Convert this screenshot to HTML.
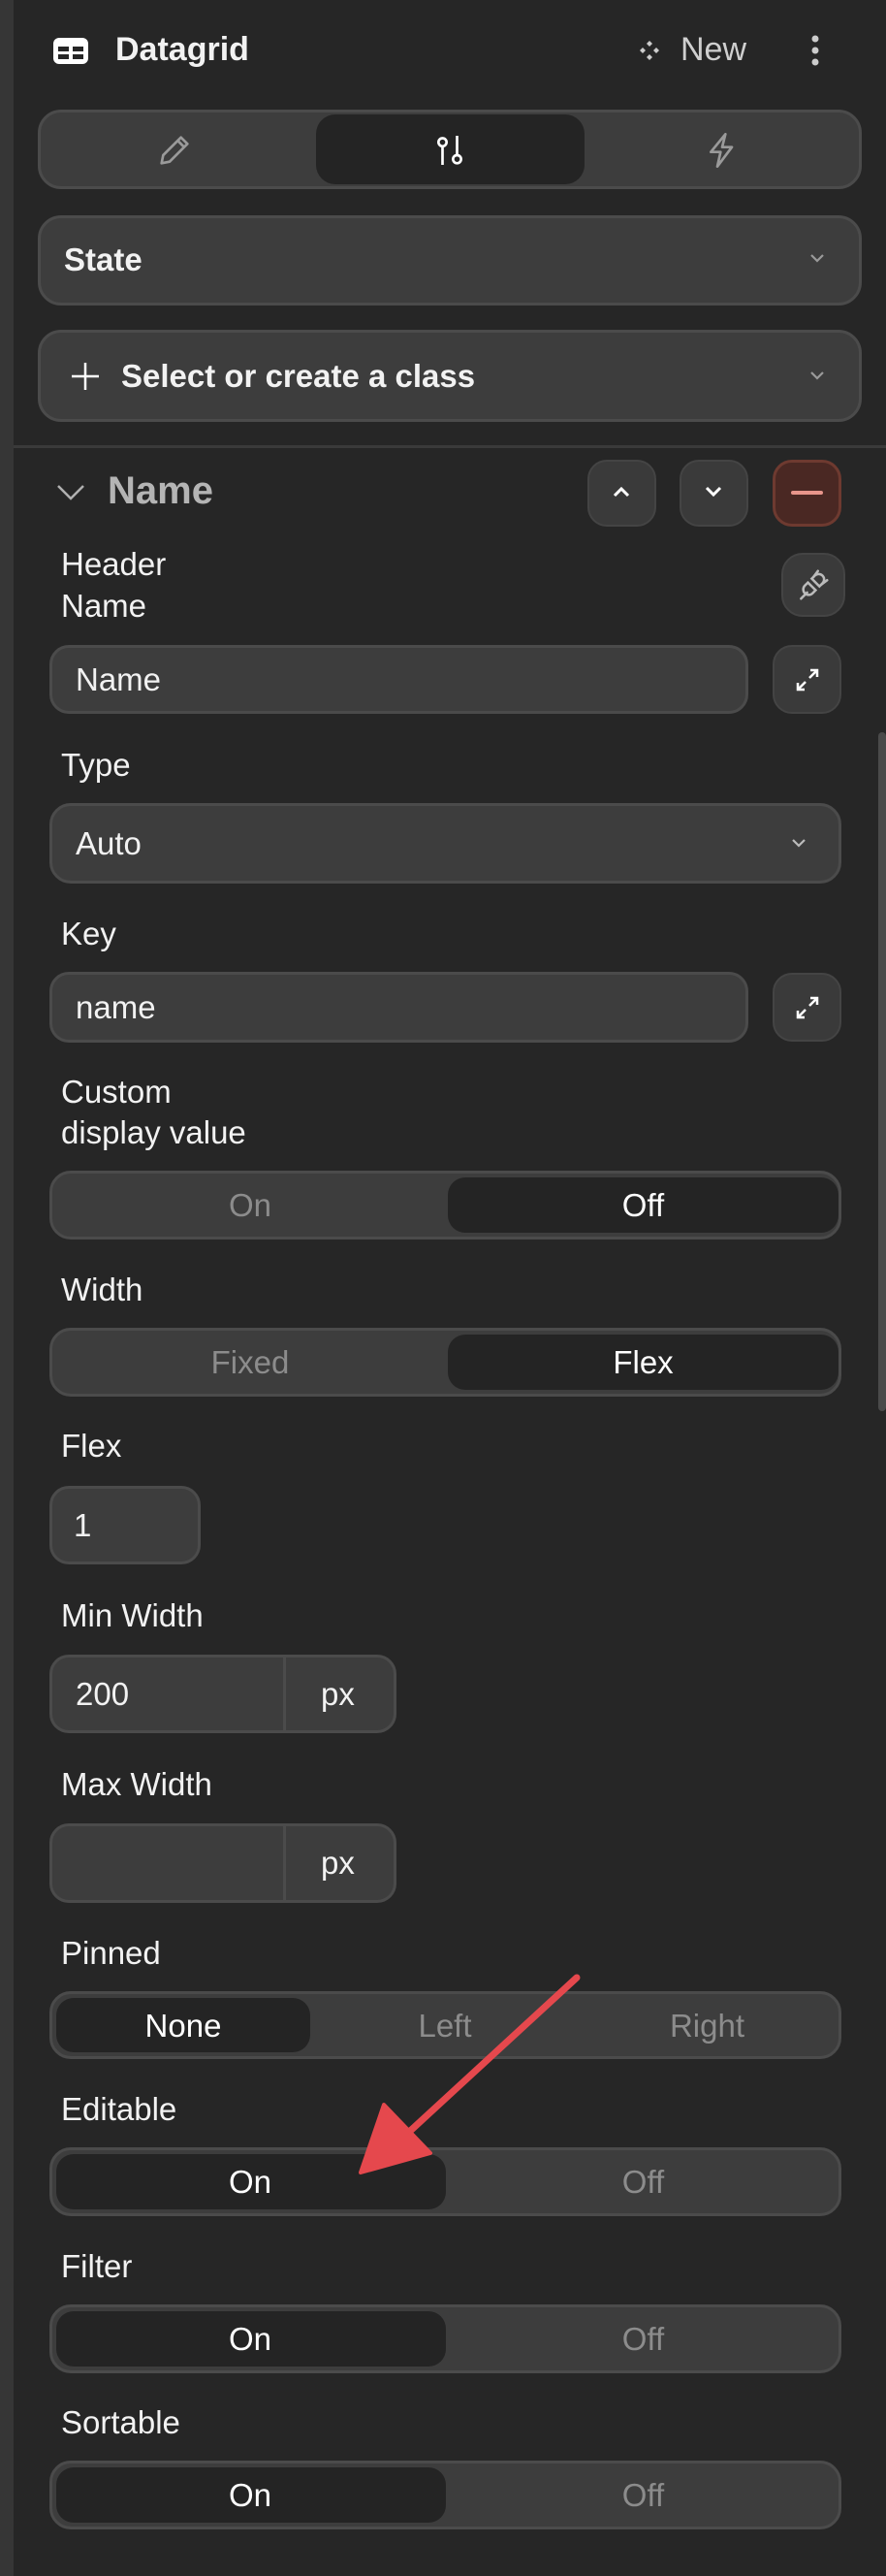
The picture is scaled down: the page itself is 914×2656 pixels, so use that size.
<!DOCTYPE html>
<html><head><meta charset="utf-8"><style>
*{box-sizing:border-box;margin:0;padding:0}
body{width:914px;height:2656px;background:#262626;position:relative;overflow:hidden;font-family:"Liberation Sans",sans-serif;color:#f2f2f2}
.a{position:absolute}
.strip{left:0;top:0;width:14px;height:2656px;background:#363636}
.box{position:absolute;background:#3d3d3d;border:3px solid #4b4b4b;border-radius:24px}
.lbl{position:absolute;left:63px;font-size:33px;line-height:42px;color:#f2f2f2}
.txt{position:absolute;font-size:33px;line-height:40px}
.seg{position:absolute;left:51px;width:817px;height:71px;background:#3d3d3d;border:3px solid #4b4b4b;border-radius:22px}
.seg .on{position:absolute;top:4px;height:57px;background:#242424;border-radius:18px}
.seg span{position:absolute;top:0;line-height:65px;font-size:33px;text-align:center;color:#8c8c8c}
.seg span.w{color:#fff}
.btn{position:absolute;background:#3a3a3a;border:2px solid #444;border-radius:20px}
</style></head><body>
<div class="a strip"></div>

<svg class="a" style="left:54px;top:38px" width="38" height="29" viewBox="0 0 38 29"><rect x="1" y="1" width="36" height="27" rx="6" fill="#fff"/><rect x="6" y="10" width="11" height="5" fill="#262626"/><rect x="21" y="10" width="11" height="5" fill="#262626"/><rect x="6" y="18" width="11" height="5" fill="#262626"/><rect x="21" y="18" width="11" height="5" fill="#262626"/></svg>
<div class="txt" style="left:119px;top:31px;font-weight:bold;font-size:34px">Datagrid</div>
<svg class="a" style="left:658px;top:40px" width="24" height="24" viewBox="0 0 24 24" fill="#ccc"><path d="M12 2l3 3-3 3-3-3z"/><path d="M12 16l3 3-3 3-3-3z"/><path d="M5 9l3 3-3 3-3-3z"/><path d="M19 9l3 3-3 3-3-3z"/></svg>
<div class="txt" style="left:702px;top:31px;color:#cfcfcf;font-size:34px">New</div>
<svg class="a" style="left:834px;top:36px" width="14" height="32" viewBox="0 0 14 32" fill="#ccc"><circle cx="7" cy="4" r="3.5"/><circle cx="7" cy="16" r="3.5"/><circle cx="7" cy="28" r="3.5"/></svg>

<div class="box" style="left:39px;top:113px;width:850px;height:82px;border-radius:24px"></div>
<div class="a" style="left:326px;top:118px;width:277px;height:72px;background:#242424;border-radius:20px"></div>
<svg class="a" style="left:160px;top:135px" width="40" height="40" viewBox="0 0 24 24" fill="none" stroke="#9a9a9a" stroke-width="1.6" stroke-linejoin="round"><path d="M4 20l1-5L16 4l4 4L9 19z"/><path d="M14 6l4 4"/></svg>
<svg class="a" style="left:444px;top:135px" width="40" height="40" viewBox="0 0 24 24" fill="none" stroke="#fff" stroke-width="1.6"><circle cx="7.5" cy="7" r="2.5"/><path d="M7.5 9.5V21M16.5 3v12"/><circle cx="16.5" cy="17.5" r="2.5"/></svg>
<svg class="a" style="left:725px;top:135px" width="40" height="40" viewBox="0 0 24 24" fill="none" stroke="#9a9a9a" stroke-width="1.6" stroke-linejoin="round"><path d="M14 2L5 13h6l-2 9 9-12h-6z"/></svg>

<div class="box" style="left:39px;top:222px;width:850px;height:93px"></div>
<div class="txt" style="left:66px;top:248px;font-weight:bold">State</div>
<svg class="a" style="left:833px;top:259px" width="20" height="14" viewBox="0 0 20 14" fill="none" stroke="#9a9a9a" stroke-width="2.2"><path d="M4 4l6 6 6-6"/></svg>
<div class="box" style="left:39px;top:340px;width:850px;height:95px"></div>
<svg class="a" style="left:70px;top:370px" width="36" height="36" viewBox="0 0 36 36" stroke="#fff" stroke-width="2.5"><path d="M18 4v28M4 18h28"/></svg>
<div class="txt" style="left:125px;top:368px;font-weight:bold">Select or create a class</div>
<svg class="a" style="left:833px;top:380px" width="20" height="14" viewBox="0 0 20 14" fill="none" stroke="#9a9a9a" stroke-width="2.2"><path d="M4 4l6 6 6-6"/></svg>
<div class="a" style="left:14px;top:459px;width:900px;height:3px;background:#3a3a3a"></div>

<svg class="a" style="left:56px;top:495px" width="34" height="26" viewBox="0 0 34 26" fill="none" stroke="#b0b0b0" stroke-width="2.5"><path d="M4 6l13 13 13-13"/></svg>
<div class="txt" style="left:111px;top:484px;font-size:40px;line-height:44px;font-weight:bold;color:#b4b4b4">Name</div>
<div class="btn" style="left:606px;top:474px;width:71px;height:69px"></div>
<svg class="a" style="left:630px;top:498px" width="22" height="18" viewBox="0 0 22 18" fill="none" stroke="#fff" stroke-width="3"><path d="M4 13l7-7 7 7"/></svg>
<div class="btn" style="left:701px;top:474px;width:71px;height:69px"></div>
<svg class="a" style="left:725px;top:498px" width="22" height="18" viewBox="0 0 22 18" fill="none" stroke="#fff" stroke-width="3"><path d="M4 5l7 7 7-7"/></svg>
<div class="a" style="left:797px;top:474px;width:71px;height:69px;background:#4a2823;border:3px solid #6e3a30;border-radius:20px"></div>
<div class="a" style="left:816px;top:506px;width:33px;height:4px;background:#e8958b;border-radius:2px"></div>

<div class="lbl" style="top:561px">Header</div>
<div class="lbl" style="top:604px">Name</div>
<div class="a" style="left:806px;top:570px;width:66px;height:66px;background:#3a3a3a;border:2px solid #444;border-radius:22px"></div>
<svg class="a" style="left:820px;top:583px" width="38" height="40" viewBox="0 0 24 24" fill="none" stroke="#bbb" stroke-width="1.6" stroke-linecap="round"><path d="M4 21l4-4M15 3l-3 4M21 9l-4 3M8.5 10.5l5 5-2 2a3.5 3.5 0 0 1-5-5z"/><path d="M11 8l5 5 2-2a3.5 3.5 0 0 0-5-5z"/></svg>

<div class="box" style="left:51px;top:665px;width:721px;height:71px;border-radius:20px"></div>
<div class="txt" style="left:78px;top:681px">Name</div>
<div class="btn" style="left:797px;top:665px;width:71px;height:71px"></div>
<svg class="a" style="left:818px;top:686px" width="30" height="30" viewBox="0 0 30 30" fill="none" stroke="#fff" stroke-width="2.5"><path d="M18 5h7v7M25 5l-8 8M12 25H5v-7M5 25l8-8"/></svg>

<div class="lbl" style="top:768px">Type</div>
<div class="box" style="left:51px;top:828px;width:817px;height:83px;border-radius:22px"></div>
<div class="txt" style="left:78px;top:850px">Auto</div>
<svg class="a" style="left:814px;top:862px" width="20" height="14" viewBox="0 0 20 14" fill="none" stroke="#bbb" stroke-width="2.2"><path d="M4 4l6 6 6-6"/></svg>

<div class="lbl" style="top:942px">Key</div>
<div class="box" style="left:51px;top:1002px;width:721px;height:73px;border-radius:20px"></div>
<div class="txt" style="left:78px;top:1019px">name</div>
<div class="btn" style="left:797px;top:1003px;width:71px;height:71px"></div>
<svg class="a" style="left:818px;top:1024px" width="30" height="30" viewBox="0 0 30 30" fill="none" stroke="#fff" stroke-width="2.5"><path d="M18 5h7v7M25 5l-8 8M12 25H5v-7M5 25l8-8"/></svg>

<div class="lbl" style="top:1105px">Custom</div>
<div class="lbl" style="top:1147px">display value</div>
<div class="seg" style="top:1207px"><div class="on" style="left:408px;width:403px"></div><span style="left:0;width:408px">On</span><span class="w" style="left:408px;width:403px">Off</span></div>

<div class="lbl" style="top:1309px">Width</div>
<div class="seg" style="top:1369px"><div class="on" style="left:408px;width:403px"></div><span style="left:0;width:408px">Fixed</span><span class="w" style="left:408px;width:403px">Flex</span></div>

<div class="lbl" style="top:1470px">Flex</div>
<div class="box" style="left:51px;top:1532px;width:156px;height:81px;border-radius:20px"></div>
<div class="txt" style="left:76px;top:1553px">1</div>

<div class="lbl" style="top:1645px">Min Width</div>
<div class="box" style="left:51px;top:1706px;width:358px;height:81px;border-radius:20px"></div>
<div class="a" style="left:292px;top:1709px;width:3px;height:75px;background:#4b4b4b"></div>
<div class="txt" style="left:78px;top:1727px">200</div>
<div class="txt" style="left:331px;top:1727px">px</div>

<div class="lbl" style="top:1819px">Max Width</div>
<div class="box" style="left:51px;top:1880px;width:358px;height:82px;border-radius:20px"></div>
<div class="a" style="left:292px;top:1883px;width:3px;height:76px;background:#4b4b4b"></div>
<div class="txt" style="left:331px;top:1901px">px</div>

<div class="lbl" style="top:1993px">Pinned</div>
<div class="seg" style="top:2053px;height:70px"><div class="on" style="left:4px;width:262px;height:56px"></div><span class="w" style="left:0;width:270px">None</span><span style="left:270px;width:270px">Left</span><span style="left:540px;width:271px">Right</span></div>

<div class="lbl" style="top:2154px">Editable</div>
<div class="seg" style="top:2214px"><div class="on" style="left:4px;width:402px"></div><span class="w" style="left:0;width:408px">On</span><span style="left:408px;width:403px">Off</span></div>

<div class="lbl" style="top:2316px">Filter</div>
<div class="seg" style="top:2376px"><div class="on" style="left:4px;width:402px"></div><span class="w" style="left:0;width:408px">On</span><span style="left:408px;width:403px">Off</span></div>

<div class="lbl" style="top:2477px">Sortable</div>
<div class="seg" style="top:2537px"><div class="on" style="left:4px;width:402px"></div><span class="w" style="left:0;width:408px">On</span><span style="left:408px;width:403px">Off</span></div>

<div class="a" style="left:906px;top:755px;width:8px;height:700px;background:#4a4a4a;border-radius:4px"></div>

<svg class="a" style="left:0;top:0" width="914" height="2656" viewBox="0 0 914 2656">
<path d="M595 2039L420 2200" stroke="#e5484d" stroke-width="7" stroke-linecap="round"/>
<path d="M372 2240L396 2170L444 2220Z" fill="#e5484d" stroke="#e5484d" stroke-width="4" stroke-linejoin="round"/>
</svg>
</body></html>
